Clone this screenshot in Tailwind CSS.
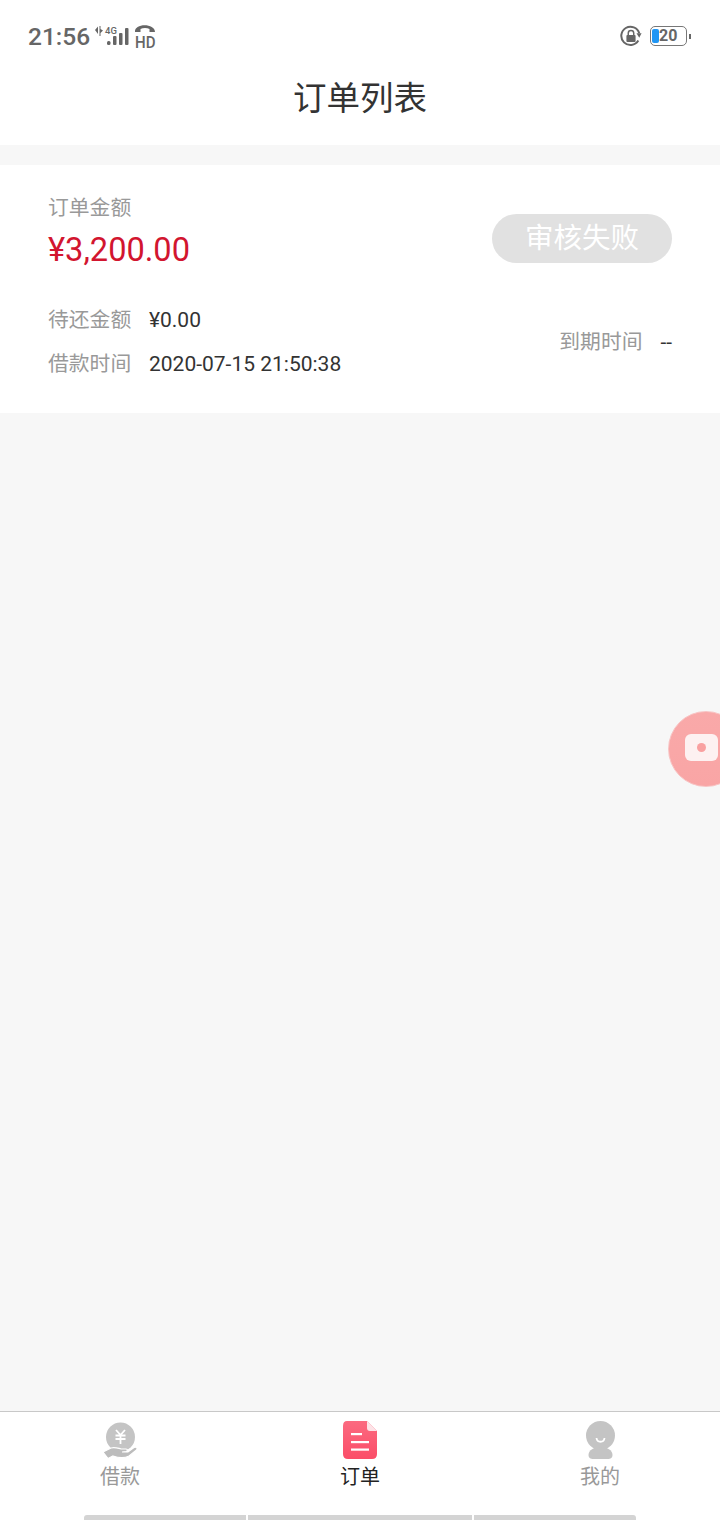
<!DOCTYPE html>
<html lang="zh">
<head>
<meta charset="utf-8">
<script src="https://cdn.jsdelivr.net/npm/@tailwindcss/browser@4"></script>
</head>
<body class="m-0">
<div class="relative w-[720px] h-[1520px] overflow-hidden flex flex-col bg-[#f7f7f7] font-['Roboto','Noto_Sans_CJK_SC',sans-serif]">
  <!-- header -->
  <header class="h-[145px] bg-white flex flex-col shrink-0">
    <div class="h-[72px] pl-[28px] pr-[29px] flex items-center justify-between text-[#666666]">
      <div class="flex items-center">
        <span class="mt-[2px] w-[62px] text-[24.5px] leading-none font-medium font-['Roboto',sans-serif]">21:56</span>
        <svg class="ml-[2px] mt-[4px]" width="66" height="30" viewBox="0 0 66 30" fill="#666666">
          <path d="M3 7 L6 3.5 V11 Z M7.5 3 H8.5 V6 L11 7.5 L8.5 10 V13 H7.5 Z"/>
          <text x="13" y="11" font-size="9.5" font-family="Roboto, sans-serif" font-weight="500">4G</text>
          <rect x="15" y="18" width="3.5" height="4" rx="1.5"/>
          <rect x="21" y="13" width="3.5" height="9" rx="1"/>
          <rect x="27" y="10" width="3.5" height="12" rx="1"/>
          <rect x="33" y="5" width="3.5" height="17" rx="1"/>
          <path d="M43 9 C42 0 63 0 63 9 L57.5 9 L57.5 6 C55 4.5 51 4.5 48.5 6 L48.5 9 Z"/>
          <text x="43" y="24.5" font-size="17" font-family="Roboto, sans-serif" font-weight="500" textLength="20.5" lengthAdjust="spacingAndGlyphs">HD</text>
        </svg>
      </div>
      <div class="flex items-center">
        <svg width="22" height="22" viewBox="0 0 24 24" fill="none">
          <path d="M20 17 A10 10 0 1 1 21 9" stroke="#666666" stroke-width="2.2"/>
          <path d="M18 9 L23.5 9 L21 14 Z" fill="#666666"/>
          <rect x="7" y="11" width="10" height="7.5" rx="1" fill="#666666"/>
          <path d="M9 11 V9 a3 3 0 0 1 6 0 V11" stroke="#666666" stroke-width="1.6"/>
        </svg>
        <div class="ml-[8px] w-[37px] h-[20px] relative rounded-[5px] border border-[#777777] flex items-center">
          <div class="absolute left-[1px] top-[2px] bottom-[2px] w-[7px] rounded-[2px] bg-[#2196f3]"></div>
          <span class="ml-[8px] text-[16px] leading-none font-bold text-[#666666] font-['Roboto',sans-serif]">20</span>
        </div>
        <div class="ml-[2px] w-[2px] h-[5px] bg-[#666666]"></div>
      </div>
    </div>
    <h1 class="text-center text-[33.5px] leading-[50px] text-[#333333] mt-[2px] font-normal">订单列表</h1>
  </header>

  <!-- order card -->
  <section class="mt-[20px] h-[248px] bg-white px-[48px] shrink-0">
    <div class="flex items-start justify-between pt-[28px]">
      <div>
        <div class="text-[20.8px] leading-[30px] text-[#999999]">订单金额</div>
        <div class="text-[32.6px] leading-[40px] mt-[7px] text-[#d2152f]">¥3,200.00</div>
      </div>
      <div class="w-[180px] h-[49px] mt-[21px] rounded-full bg-[#e1e1e1] text-white text-[28.5px] leading-[49px] text-center">审核失败</div>
    </div>
    <div class="flex items-center justify-between mt-[36px]">
      <div class="flex flex-col gap-[14px]">
        <div class="flex items-center h-[30px]"><span class="w-[101px] text-[20.8px] text-[#999999]">待还金额</span><span class="text-[21px] text-[#333333]">¥0.00</span></div>
        <div class="flex items-center h-[30px]"><span class="w-[101px] text-[20.8px] text-[#999999]">借款时间</span><span class="text-[21px] text-[#333333]">2020-07-15 21:50:38</span></div>
      </div>
      <div class="flex items-center text-[20.8px]"><span class="text-[#999999]">到期时间</span><span class="ml-[18px] text-[#333333]">--</span></div>
    </div>
  </section>

  <div class="flex-1"></div>

  <!-- tab bar -->
  <nav class="h-[109px] bg-white border-t border-[#c8c8c8] shrink-0 relative">
    <div class="grid grid-cols-3 h-[104px]">
      <div class="flex flex-col items-center pt-[9px]">
        <svg width="38" height="38" viewBox="0 0 38 38">
          <circle cx="19.5" cy="16" r="14.5" fill="#c4c4c4"/>
          <path d="M15 9 L19.5 14 L24 9 M14.5 14.5 H24.5 M14.5 18 H24.5 M19.5 14 V23" stroke="#fff" stroke-width="1.8" fill="none"/>
          <path d="M2 31 L8 28 C12 25 16 27 20 28 H25 C27 28 27 30 25 30.5 L21 31 H27 L33 26.5 C35 25.5 37 27 35.5 29 L28 35 C24 37 18 37 12 35 L7 37.5 Z" fill="#bcbcbc" stroke="#fff" stroke-width="1.2"/>
        </svg>
        <span class="text-[20px] leading-[28px] mt-[4px] text-[#999999]">借款</span>
      </div>
      <div class="flex flex-col items-center pt-[9px]">
        <svg width="38" height="38" viewBox="0 0 38 38">
          <defs><linearGradient id="g" x1="0" y1="0" x2="0" y2="1"><stop offset="0" stop-color="#fb6a80"/><stop offset="1" stop-color="#fb4d68"/></linearGradient></defs>
          <path d="M6 0 H26 L36 10 V33 Q36 38 31 38 H7 Q2 38 2 33 V5 Q2 0 6 0 Z" fill="url(#g)"/>
          <path d="M26 0 L36 10 H29 Q26 10 26 7 Z" fill="#fde3e7"/>
          <rect x="10" y="12" width="11" height="2.2" fill="#fff"/>
          <rect x="10" y="20" width="18" height="2.2" fill="#fff"/>
          <rect x="10" y="27.5" width="18" height="2.2" fill="#fff"/>
        </svg>
        <span class="text-[20px] leading-[28px] mt-[4px] text-[#222222]">订单</span>
      </div>
      <div class="flex flex-col items-center pt-[9px]">
        <svg width="38" height="38" viewBox="0 0 38 38">
          <circle cx="19.5" cy="14.5" r="14.5" fill="#c4c4c4"/>
          <path d="M7.5 34 C7.5 29 13 26 19.5 26 C26 26 31.5 29 31.5 34 C31.5 38 28 38 26 38 H13 C11 38 7.5 38 7.5 34 Z" fill="#c4c4c4"/>
          <path d="M15.5 17 C16 22 23 22 23.5 17" stroke="#fff" stroke-width="1.8" fill="none"/>
        </svg>
        <span class="text-[20px] leading-[28px] mt-[4px] text-[#999999]">我的</span>
      </div>
    </div>
    <div class="absolute left-[84px] bottom-0 flex gap-[2px] h-[5px]">
      <div class="w-[162px] bg-[#d4d4d4] rounded-tl-[3px]"></div>
      <div class="w-[224px] bg-[#d4d4d4]"></div>
      <div class="w-[162px] bg-[#d4d4d4] rounded-tr-[3px]"></div>
    </div>
  </nav>

  <!-- floating recorder button -->
  <div class="absolute left-[668px] top-[711px] w-[76px] h-[76px] rounded-full bg-gradient-to-b from-[#f9a9a9] to-[#f9a5a5] border border-[#f8c4c4] flex items-center pl-[16px]">
    <div class="mb-[3px] w-[33px] h-[27px] rounded-[6px] bg-[#fdf1f1] flex items-center justify-center shrink-0">
      <div class="w-[9px] h-[9px] rounded-full bg-[#f9a0a0]"></div>
    </div>
  </div>
</div>
</body>
</html>
